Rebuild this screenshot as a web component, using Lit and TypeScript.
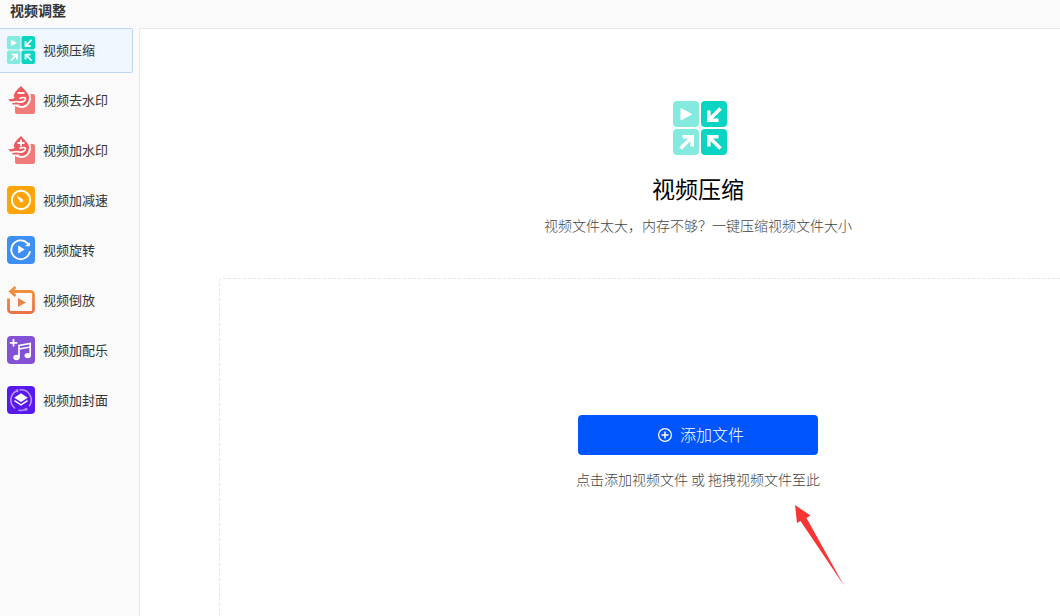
import { LitElement, html, css, svg } from "lit";
import { customElement, state } from "lit/decorators.js";

const compressIcon = svg`
  <g>
    <rect x="0" y="0" width="26" height="26" rx="4" fill="#84e9df"/>
    <rect x="28" y="0" width="26" height="26" rx="4" fill="#0ad4c2"/>
    <rect x="0" y="28" width="26" height="26" rx="4" fill="#84e9df"/>
    <rect x="28" y="28" width="26" height="26" rx="4" fill="#0ad4c2"/>
    <path d="M8 7.5v11.5l10.500-5.750z" fill="#fff" stroke="#fff" stroke-width="1" stroke-linejoin="round"/>
    <g fill="none" stroke="#fff" stroke-width="3.6">
      <path d="M47.500 7.500L37 18M35.800 9.500V19.200H45.500"/>
      <path d="M7.500 47.500L18 37M9.500 35.800H19.200V45.500"/>
      <path d="M47.500 47.500L37 37M35.800 45.500V35.800H45.500"/>
    </g>
  </g>`;

const dropBase = svg`
  <path d="M8 19H12L22 8H26A2 2 0 0 1 28 10V26A2 2 0 0 1 26 28H10A2 2 0 0 1 8 26z" fill="#ef7b7b"/>
  <path d="M14 0C11.500 2.500 7 6 6.800 10.500L14 20H16C20 19.500 22 16 22 12C22 7 16.500 3 14 0z" fill="#ee5a5d"/>
  <path d="M22.300 8C24.500 14 21 21 14.500 21C11.500 21 10.500 19 7 19" fill="none" stroke="#fafafa" stroke-width="1.900"/>
  <path d="M1 13C5 14.500 8 11 13 10.800L19 11.500L18 16L12 18.500H6z" fill="#ee5a5d"/>
  <path d="M0 16.300C5 17.500 7 15 11 15.800C14.500 16.500 18.500 15.500 18.500 12.800C18.500 10.800 15.500 11.500 13 12.300" fill="none" stroke="#fafafa" stroke-width="1.700" stroke-linecap="round"/>`;

const icons: Record<string, unknown> = {
  compress: svg`<svg viewBox="0 0 54 54" aria-hidden="true">${compressIcon}</svg>`,
  unmark: svg`<svg viewBox="0 0 28 28" aria-hidden="true">${dropBase}
    <path d="M10.500 7h7" stroke="#fff" stroke-width="1.800"/></svg>`,
  mark: svg`<svg viewBox="0 0 28 28" aria-hidden="true">${dropBase}
    <path d="M10.500 7h7M14 3.500v7" stroke="#fff" stroke-width="1.800"/></svg>`,
  speed: svg`<svg viewBox="0 0 28 28" aria-hidden="true">
    <rect width="28" height="28" rx="4" fill="#ffa50a"/>
    <circle cx="14" cy="14" r="9.200" fill="none" stroke="#fff" stroke-width="1.900"/>
    <path d="M9.500 9.800L15.700 13.200A1.700 1.700 0 0 1 13.200 15.700z" fill="#fff"/></svg>`,
  rotate: svg`<svg viewBox="0 0 28 28" aria-hidden="true">
    <rect width="28" height="28" rx="4" fill="#3e8ff3"/>
    <path d="M20.700 7.500A9.400 9.400 0 1 0 22.800 16" fill="none" stroke="#fff" stroke-width="1.900" stroke-linecap="round"/>
    <path d="M22.800 6.300V10.300H17.800z" fill="#fff"/>
    <path d="M11.200 9.500v8l6.500-4z" fill="#fff"/></svg>`,
  reverse: svg`<svg viewBox="0 0 28 28" aria-hidden="true">
    <defs><linearGradient id="o" x1="0" y1="0" x2="0" y2="28" gradientUnits="userSpaceOnUse"><stop offset="0" stop-color="#f0963c"/><stop offset="1" stop-color="#ea7048"/></linearGradient></defs>
    <path d="M4 5.500H23.500A3 3 0 0 1 26.500 8.500V23.500A3 3 0 0 1 23.500 26.500H4.500A3 3 0 0 1 1.500 23.500V12.500M8.500 1L3.500 5.500L8.500 10" fill="none" stroke="url(#o)" stroke-width="2.800"/>
    <path d="M11 12v9l8-4.500z" fill="#ee824a"/></svg>`,
  music: svg`<svg viewBox="0 0 28 28" aria-hidden="true">
    <rect width="28" height="28" rx="4" fill="#8251d6"/>
    <path d="M6.500 3v7.500M2.800 6.800h7.500" stroke="#fff" stroke-width="1.700"/>
    <path d="M12 21.500V9.500L23.200 7.500V19.500M12 13L23.200 11" fill="none" stroke="#fff" stroke-width="1.700"/>
    <ellipse cx="9.500" cy="21.500" rx="3.200" ry="2.700" fill="#fff"/>
    <ellipse cx="20.700" cy="19.600" rx="3.200" ry="2.700" fill="#fff"/></svg>`,
  cover: svg`<svg viewBox="0 0 28 28" aria-hidden="true">
    <rect width="28" height="28" rx="4" fill="#5a18f0"/>
    <g fill="none" stroke="#b394fa" stroke-width="1.600" stroke-linecap="round">
      <path d="M9.500 5A10.300 10.300 0 0 0 7.500 22"/>
      <path d="M12 24.200A10.300 10.300 0 0 0 19.500 22.900"/>
      <path d="M13 3.800A10.300 10.300 0 0 1 22.500 19.800"/></g>
    <circle cx="10" cy="4.700" r="1.500" fill="#b394fa"/><circle cx="19" cy="23.300" r="1.500" fill="#b394fa"/>
    <path d="M14 7.300L20.800 11.800L14 16L7.200 11.800z" fill="#fff"/>
    <path d="M7.500 14.700L14 18.800L20.500 14.700" fill="none" stroke="#fff" stroke-width="1.400"/></svg>`,
};

const tools = [
  { id: "compress", label: "视频压缩" },
  { id: "unmark", label: "视频去水印" },
  { id: "mark", label: "视频加水印" },
  { id: "speed", label: "视频加减速" },
  { id: "rotate", label: "视频旋转" },
  { id: "reverse", label: "视频倒放" },
  { id: "music", label: "视频加配乐" },
  { id: "cover", label: "视频加封面" },
];

@customElement("app-root")
export class AppRoot extends LitElement {
  @state() private active = "compress";

  static styles = css`
    :host {
      display: flex;
      flex-direction: column;
      height: 100vh;
      overflow: hidden;
      position: relative;
      background: #fafafa;
      color: #333;
      font-family: "Noto Sans CJK SC", sans-serif;
      font-weight: 300;
    }
    * { box-sizing: border-box; }
    svg { display: block; }
    .title {
      flex: none;
      height: 28px;
      margin: 0;
      padding: 0 10px;
      font-size: 14px;
      line-height: 20px;
      font-weight: 700;
    }
    .body { flex: 1; display: flex; min-height: 0; }
    .side {
      flex: none;
      display: flex;
      flex-direction: column;
      gap: 5px;
      width: 139px;
      padding-right: 6px;
    }
    .item {
      display: flex;
      align-items: center;
      gap: 8px;
      height: 45px;
      padding: 0 7px 1px;
      border: 1px solid transparent;
      border-left: 0;
      border-radius: 0 2px 2px 0;
      background: none;
      color: inherit;
      font: inherit;
      font-size: 13px;
      font-weight: 400;
      line-height: 20px;
      cursor: pointer;
    }
    .item.active { background: #f0f6ff; border-color: #bfd6f2; }
    .icon { flex: none; width: 28px; height: 28px; }
    .main {
      flex: 1 0 auto;
      display: flex;
      flex-direction: column;
      align-items: center;
      padding: 72px 79px 0;
      border: 1px solid #e8e8e8;
      border-width: 1px 0 0 1px;
      background: #fff;
    }
    .hero { width: 58px; padding-left: 4px; }
    .name {
      margin: 15px 0 0;
      color: #000;
      font-size: 23px;
      line-height: 36px;
      font-weight: 400;
    }
    .desc { margin: 8px 0 0; color: #444; font-size: 14px; line-height: 22px; }
    .drop {
      flex: 1;
      align-self: stretch;
      min-width: 958px;
      margin-top: 42px;
      padding-top: 136px;
      display: flex;
      flex-direction: column;
      align-items: center;
      border: 1px dashed #e6e6e6;
      border-bottom: 0;
      border-radius: 4px 4px 0 0;
    }
    .add {
      display: flex;
      align-items: center;
      justify-content: center;
      gap: 8px;
      width: 240px;
      height: 40px;
      padding: 0 0 0 6px;
      border: 0;
      border-radius: 4px;
      background: #0055ff;
      color: #fff;
      font: inherit;
      font-size: 16px;
      line-height: 24px;
      cursor: pointer;
    }
    .add span { padding-bottom: 2px; }
    .plus { width: 14px; height: 14px; }
    .hint { margin: 13px 0 0; color: #444; font-size: 14px; line-height: 22px; }
    .pointer { position: absolute; left: 794px; top: 504px; width: 50px; height: 82px; }
  `;

  render() {
    const tool = tools.find((t) => t.id === this.active)!;
    return html`
      <h1 class="title">视频调整</h1>
      <div class="body">
        <nav class="side">
          ${tools.map(
            (t) => html`<button
              type="button"
              class="item ${t.id === this.active ? "active" : ""}"
              @click=${() => (this.active = t.id)}
            ><span class="icon">${icons[t.id]}</span><span>${t.label}</span></button>`
          )}
        </nav>
        <main class="main">
          <div class="hero">${icons[tool.id]}</div>
          <h2 class="name">${tool.label}</h2>
          <p class="desc">视频文件太大，内存不够？一键压缩视频文件大小</p>
          <section class="drop">
            <button type="button" class="add">
              <svg class="plus" viewBox="0 0 14 14" fill="none" stroke="#fff" aria-hidden="true">
                <circle cx="7" cy="7" r="6.400" stroke-width="1.200"/>
                <path d="M7 3.500v7M3.500 7h7" stroke-width="1.500"/>
              </svg>
              <span>添加文件</span>
            </button>
            <p class="hint">点击添加视频文件 或 拖拽视频文件至此</p>
          </section>
        </main>
      </div>
      <svg class="pointer" viewBox="0 0 50 82" aria-hidden="true">
        <path d="M1 1L16.500 11.500L12.500 14L50 81.500L6.500 17L3 19z" fill="#fb3434"/>
      </svg>
    `;
  }
}
